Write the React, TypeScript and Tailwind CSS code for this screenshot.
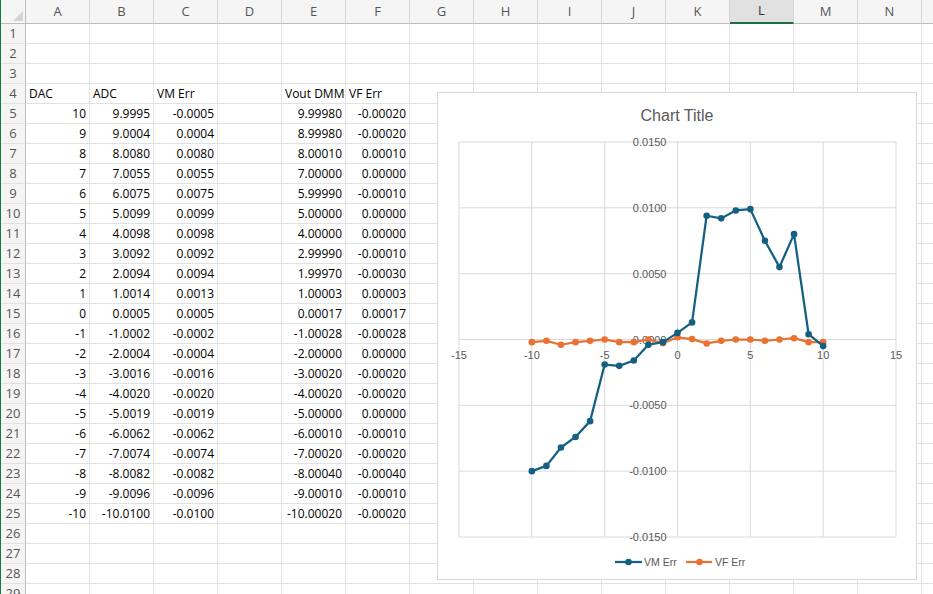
import React from 'react';

const COLS = ['A', 'B', 'C', 'D', 'E', 'F', 'G', 'H', 'I', 'J', 'K', 'L', 'M', 'N'];

// [DAC, ADC, VM Err, Vout DMM, VF Err]
const data: string[][] = [
  ['10', '9.9995', '-0.0005', '9.99980', '-0.00020'],
  ['9', '9.0004', '0.0004', '8.99980', '-0.00020'],
  ['8', '8.0080', '0.0080', '8.00010', '0.00010'],
  ['7', '7.0055', '0.0055', '7.00000', '0.00000'],
  ['6', '6.0075', '0.0075', '5.99990', '-0.00010'],
  ['5', '5.0099', '0.0099', '5.00000', '0.00000'],
  ['4', '4.0098', '0.0098', '4.00000', '0.00000'],
  ['3', '3.0092', '0.0092', '2.99990', '-0.00010'],
  ['2', '2.0094', '0.0094', '1.99970', '-0.00030'],
  ['1', '1.0014', '0.0013', '1.00003', '0.00003'],
  ['0', '0.0005', '0.0005', '0.00017', '0.00017'],
  ['-1', '-1.0002', '-0.0002', '-1.00028', '-0.00028'],
  ['-2', '-2.0004', '-0.0004', '-2.00000', '0.00000'],
  ['-3', '-3.0016', '-0.0016', '-3.00020', '-0.00020'],
  ['-4', '-4.0020', '-0.0020', '-4.00020', '-0.00020'],
  ['-5', '-5.0019', '-0.0019', '-5.00000', '0.00000'],
  ['-6', '-6.0062', '-0.0062', '-6.00010', '-0.00010'],
  ['-7', '-7.0074', '-0.0074', '-7.00020', '-0.00020'],
  ['-8', '-8.0082', '-0.0082', '-8.00040', '-0.00040'],
  ['-9', '-9.0096', '-0.0096', '-9.00010', '-0.00010'],
  ['-10', '-10.0100', '-0.0100', '-10.00020', '-0.00020'],
];

type Cell = { text: string; right?: boolean };

function rowCells(r: number): Record<string, Cell> {
  if (r === 4) {
    return {
      A: { text: 'DAC' },
      B: { text: 'ADC' },
      C: { text: 'VM Err' },
      E: { text: 'Vout DMM' },
      F: { text: 'VF Err' },
    };
  }
  const d = data[r - 5];
  if (!d) return {};
  return {
    A: { text: d[0], right: true },
    B: { text: d[1], right: true },
    C: { text: d[2], right: true },
    E: { text: d[3], right: true },
    F: { text: d[4], right: true },
  };
}

// chart geometry, in px inside the chart box
const PL = 21;
const PR = 458;
const PT = 49;
const PB = 444;
const xOf = (v: number) => PL + ((v + 15) / 30) * (PR - PL);
const yOf = (v: number) => PT + ((0.015 - v) / 0.03) * (PB - PT);

function Chart() {
  const vm = data.map((d) => [xOf(+d[0]), yOf(+d[2])]);
  const vf = data.map((d) => [xOf(+d[0]), yOf(+d[4])]);
  const xTicks = [-15, -10, -5, 0, 5, 10, 15];
  const yTicks = [0.015, 0.01, 0.005, 0, -0.005, -0.01, -0.015];
  const font = '"Liberation Sans", Arial, sans-serif';

  return (
    <div className="absolute left-[436px] top-[92px] w-[480px] h-[488px] bg-white border border-[#d9d9d9]">
      <svg width="478" height="486" viewBox="0 0 478 486">
        {xTicks.map((t) => (
          <line key={'x' + t} x1={xOf(t)} x2={xOf(t)} y1={PT} y2={PB} stroke="#d9d9d9" strokeWidth="1" />
        ))}
        {yTicks.map((t) => (
          <line key={'y' + t} x1={PL} x2={PR} y1={yOf(t)} y2={yOf(t)} stroke="#d9d9d9" strokeWidth="1" />
        ))}

        <text x="239" y="27.5" textAnchor="middle" fontSize="16" fill="#595959" fontFamily={font}>
          Chart Title
        </text>

        {yTicks.map((t) => (
          <text
            key={'yl' + t}
            x={xOf(0) - 11}
            y={yOf(t) + 4}
            textAnchor="end"
            fontSize="11"
            fill="#595959"
            fontFamily={font}
          >
            {t.toFixed(4)}
          </text>
        ))}
        {xTicks.map((t) => (
          <text
            key={'xl' + t}
            x={xOf(t)}
            y={yOf(0) + 19}
            textAnchor="middle"
            fontSize="11"
            fill="#595959"
            fontFamily={font}
          >
            {t}
          </text>
        ))}

        <polyline points={vf.map((p) => p.join(',')).join(' ')} fill="none" stroke="#e97132" strokeWidth="2.25" strokeLinejoin="round" />
        {vf.map((p, i) => (
          <circle key={'f' + i} cx={p[0]} cy={p[1]} r="3.3" fill="#e97132" />
        ))}
        <polyline points={vm.map((p) => p.join(',')).join(' ')} fill="none" stroke="#156082" strokeWidth="2.25" strokeLinejoin="round" />
        {vm.map((p, i) => (
          <circle key={'m' + i} cx={p[0]} cy={p[1]} r="3.3" fill="#156082" />
        ))}

        {/* legend */}
        <line x1="177" x2="204" y1="469" y2="469" stroke="#156082" strokeWidth="2.25" />
        <circle cx="190.5" cy="469" r="3.3" fill="#156082" />
        <text x="206" y="473" fontSize="10.5" fill="#595959" fontFamily={font}>
          VM Err
        </text>
        <line x1="248" x2="274" y1="469" y2="469" stroke="#e97132" strokeWidth="2.25" />
        <circle cx="261.5" cy="469" r="3.3" fill="#e97132" />
        <text x="277" y="473" fontSize="10.5" fill="#595959" fontFamily={font}>
          VF Err
        </text>
      </svg>
    </div>
  );
}

export default function App() {
  const rows = Array.from({ length: 29 }, (_, i) => i + 1);

  return (
    <div className="relative w-[933px] h-[594px] overflow-hidden bg-white border-l border-[#107c41] font-['Open_Sans',Arial,sans-serif] text-[12px] text-black">
      <div className="grid grid-cols-[25px_repeat(14,64px)_1fr]">
        {/* header row */}
        <div className="h-[24px] bg-[#f5f5f5] border-r border-b border-[#bdbdbd] relative">
          <svg className="absolute right-[2px] bottom-[2px]" width="10" height="10" viewBox="0 0 10 10">
            <polygon points="10,0 10,10 0,10" fill="#d4d4d4" />
          </svg>
        </div>
        {COLS.map((c) => (
          <div
            key={c}
            className={
              c === 'L'
                ? 'h-[24px] bg-[#e1e1e1] border-r border-[#d4d4d4] border-b-2 border-b-[#1e6e42] flex items-center justify-center text-[13px] text-[#333]'
                : 'h-[24px] bg-[#f5f5f5] border-r border-[#d4d4d4] border-b border-b-[#bdbdbd] flex items-center justify-center text-[13px] text-[#555]'
            }
          >
            {c}
          </div>
        ))}
        <div className="h-[24px] bg-[#f5f5f5] border-b border-[#bdbdbd]" />

        {rows.map((r) => {
          const cells = rowCells(r);
          return (
            <React.Fragment key={r}>
              <div className="h-[20px] bg-[#f5f5f5] border-r border-[#bdbdbd] border-b border-b-[#e1e1e1] flex items-center justify-center text-[13px] text-[#555]">
                {r}
              </div>
              {COLS.map((c) => {
                const cell = cells[c];
                return (
                  <div
                    key={c}
                    className={
                      'h-[20px] border-r border-b border-[#e1e1e1] flex items-center px-[3px] whitespace-nowrap overflow-visible ' +
                      (cell?.right ? 'justify-end' : 'justify-start')
                    }
                  >
                    {cell?.text}
                  </div>
                );
              })}
              <div className="h-[20px] border-b border-[#e1e1e1]" />
            </React.Fragment>
          );
        })}
      </div>
      <Chart />
    </div>
  );
}
